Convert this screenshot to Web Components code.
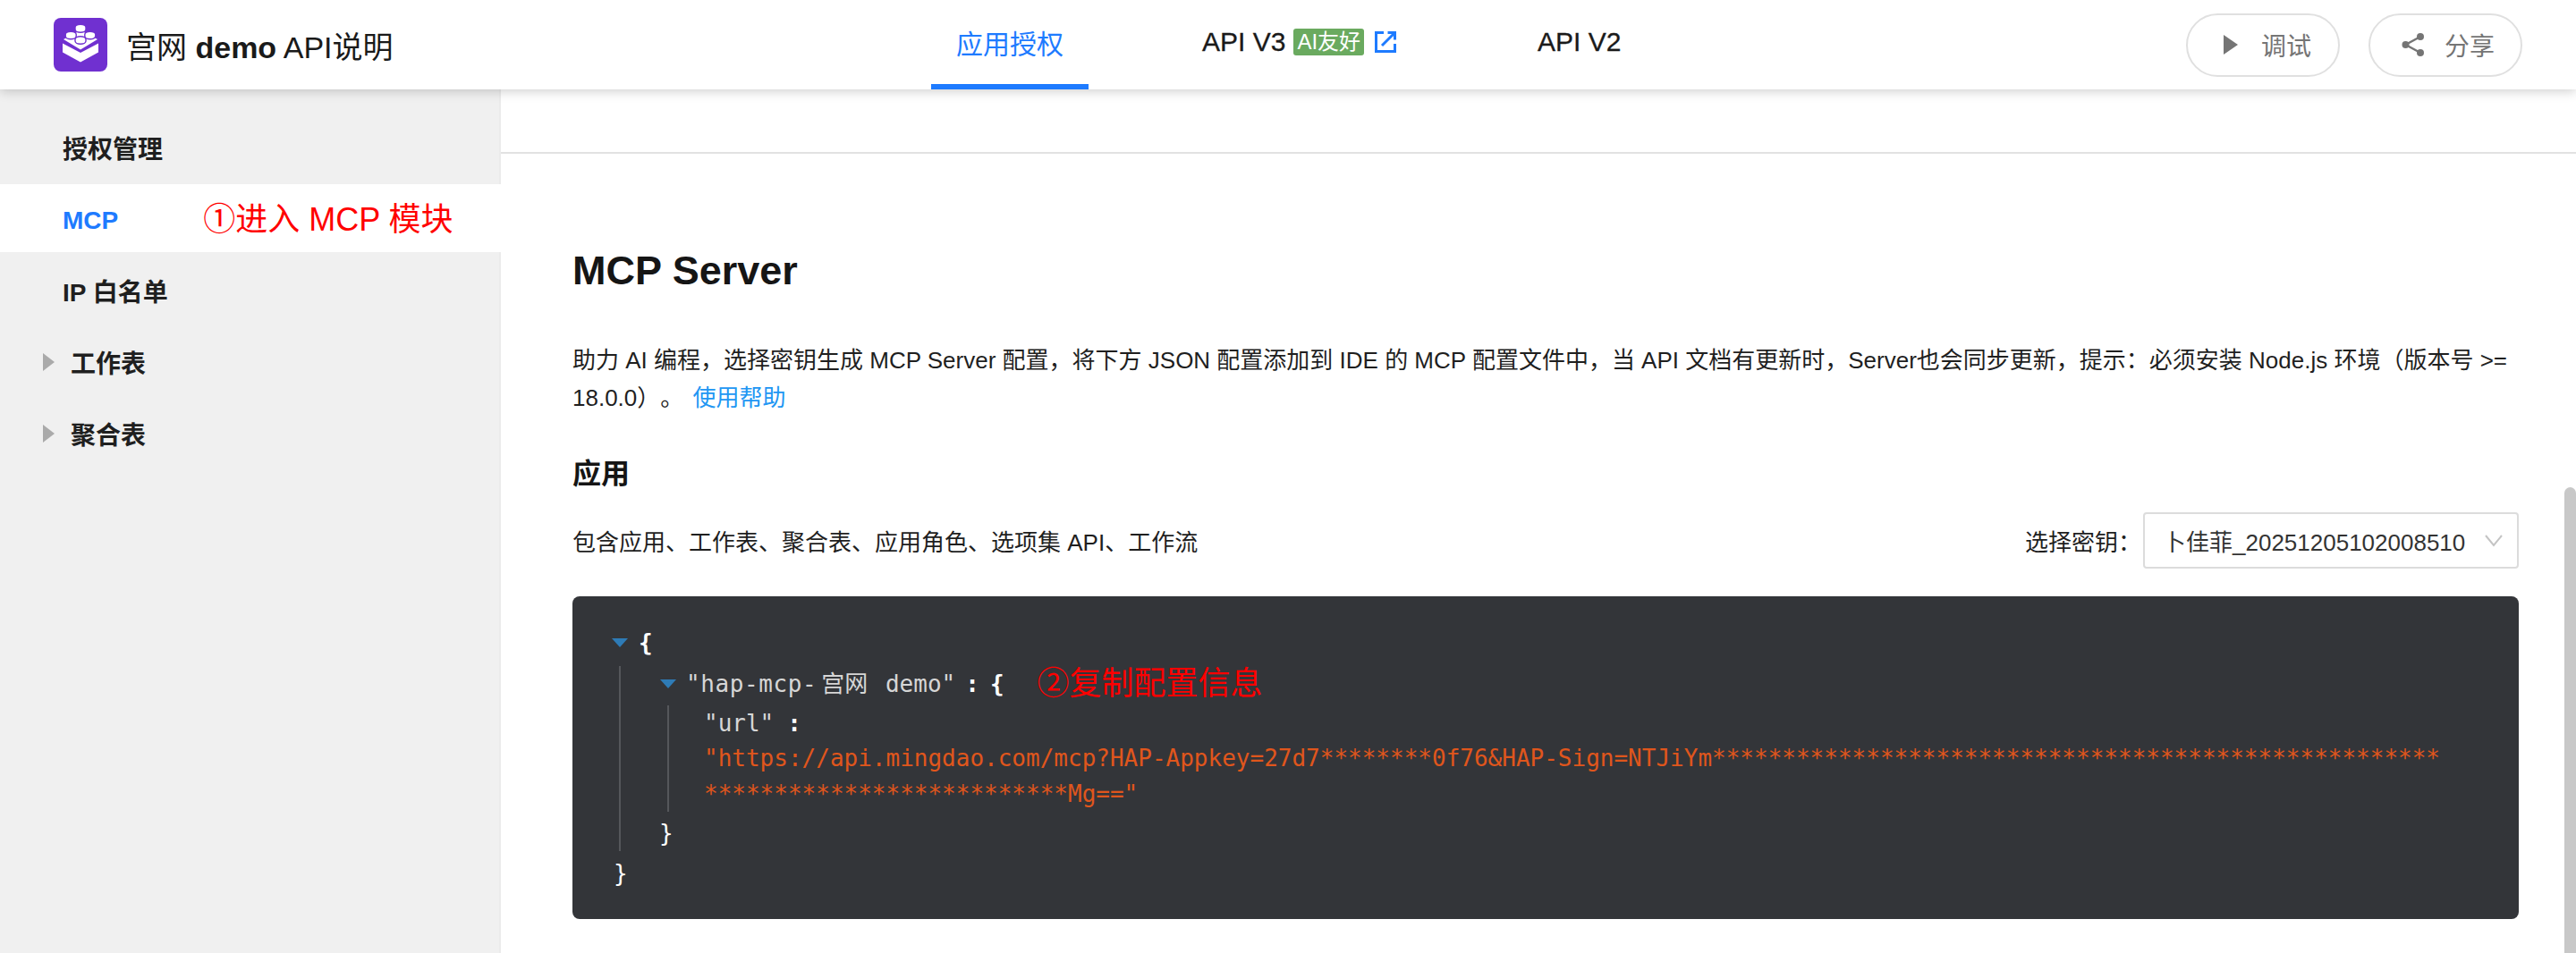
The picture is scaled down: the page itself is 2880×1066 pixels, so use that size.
<!DOCTYPE html>
<html lang="zh-CN">
<head>
<meta charset="utf-8">
<title>宫网 demo API说明</title>
<style>
  html, body { margin: 0; height: 100%; overflow: hidden; }
  body {
    font-family: "Liberation Sans", "Noto Sans CJK SC", sans-serif;
    color: #1a1a1a;
  }
  .shell { display: flex; flex-direction: column; height: 1066px; }
  .body-row { display: flex; flex: 1; min-height: 0; }
</style>
</head>
<body>
  <div class="shell">
    <doc-header>
      <tab-link active>应用授权</tab-link>
      <tab-link style="margin-left:99px" badge="AI友好" external>API V3</tab-link>
      <tab-link style="margin-left:101px">API V2</tab-link>
    </doc-header>
    <div class="body-row">
      <side-nav>
        <nav-item>授权管理</nav-item>
        <nav-item active>MCP<span slot="note">①进入 MCP 模块</span></nav-item>
        <nav-item>IP 白名单</nav-item>
        <nav-item expandable>工作表</nav-item>
        <nav-item expandable>聚合表</nav-item>
      </side-nav>
      <doc-main>
        <json-view><span slot="note">②复制配置信息</span></json-view>
      </doc-main>
    </div>
  </div>

<script>
// Barra superior: logo, pestañas (slot) y botones
class DocHeader extends HTMLElement {
  constructor() {
    super();
    this.attachShadow({ mode: "open" });
    this.shadowRoot.innerHTML = `
      <style>
        :host {
          display: flex;
          align-items: center;
          position: relative;
          z-index: 2;
          height: 100px;
          flex: none;
          background: #fff;
          box-shadow: 0 2px 12px rgba(0, 0, 0, 0.2);
        }
        .brand { display: flex; align-items: center; width: 1041px; padding-left: 60px; box-sizing: border-box; flex: none; }
        .brand svg { display: block; flex: none; }
        .title { margin-left: 21px; font-size: 34px; color: #1a1a1a; white-space: nowrap; }
        .title b { font-weight: 700; }
        .tabs { display: flex; height: 100%; flex: none; }
        .actions { margin-left: auto; margin-right: 60px; display: flex; gap: 32px; }
      </style>
      <div class="brand">
        <svg width="60" height="60" viewBox="0 0 60 60">
          <rect width="60" height="60" rx="8" fill="#7030d0"/>
          <path d="M10 28.5 L30 39 L50 28.5 V38.5 L30 49.5 L10 38.5 Z" fill="#fff"/>
          <path d="M11 24 L30 14 L49 24 L30 35.5 Z" fill="#fff"/>
          <g fill="#fff" stroke="#7030d0" stroke-width="1.4">
            <path d="M24 13 v-2.5 a6 3.2 0 0 1 12 0 V13 a6 3.2 0 0 1 -12 0 Z"/>
            <path d="M13.2 20.5 v-2 a6 3.2 0 0 1 12 0 v2 a6 3.2 0 0 1 -12 0 Z"/>
            <path d="M34.8 20.5 v-2 a6 3.2 0 0 1 12 0 v2 a6 3.2 0 0 1 -12 0 Z"/>
            <path d="M24 26 v-2 a6 3.2 0 0 1 12 0 v2 a6 3.2 0 0 1 -12 0 Z"/>
          </g>
        </svg>
        <span class="title">宫网 <b>demo</b> API说明</span>
      </div>
      <nav class="tabs"><slot></slot></nav>
      <div class="actions">
        <pill-button label="调试" icon="play"></pill-button>
        <pill-button label="分享" icon="share"></pill-button>
      </div>
    `;
  }
}

// Pestaña de la barra superior
class TabLink extends HTMLElement {
  constructor() {
    super();
    this.attachShadow({ mode: "open" });
  }

  connectedCallback() {
    const badge = this.getAttribute("badge");
    const external = this.hasAttribute("external");
    this.shadowRoot.innerHTML = `
      <style>
        :host {
          display: flex;
          align-items: center;
          box-sizing: border-box;
          height: 100px;
          padding: 0 28px;
          font-size: 30px;
          color: #1a1a1a;
          -webkit-text-stroke: 0.3px #1a1a1a;
          white-space: nowrap;
          border-bottom: 6px solid transparent;
        }
        :host([active]) { color: #1e7bff; -webkit-text-stroke: 0; border-bottom-color: #1e7bff; }
        .badge {
          margin-left: 9px;
          height: 30px;
          line-height: 30px;
          padding: 0 4px;
          border-radius: 3px;
          background: #6aaa5f;
          color: #fff;
          -webkit-text-stroke: 0;
          font-size: 24px;
        }
        svg { margin-left: 11px; display: block; }
      </style>
      <slot></slot>
      ${badge ? `<span class="badge">${badge}</span>` : ""}
      ${external ? `<svg width="26" height="26" viewBox="0 0 26 26" fill="none" stroke="#1e7bff" stroke-width="3">
        <path d="M11 2.5 H2.5 V23.5 H23.5 V15"/>
        <path d="M9 17 L22.5 3.5"/>
        <path d="M15.5 2.5 H23.5 V10.5"/>
      </svg>` : ""}
    `;
  }
}

// Botón redondeado con icono
class PillButton extends HTMLElement {
  constructor() {
    super();
    this.attachShadow({ mode: "open" });
  }

  connectedCallback() {
    const icons = {
      play: `<svg width="24" height="24" viewBox="0 0 24 24"><path d="M4 1 L20 12 L4 23 Z" fill="#757575"/></svg>`,
      share: `<svg width="26" height="28" viewBox="0 0 26 28" fill="#757575">
        <circle cx="21" cy="5" r="4"/><circle cx="4.5" cy="14" r="4"/><circle cx="21" cy="23" r="4"/>
        <path d="M21 5 L4.5 14 L21 23" fill="none" stroke="#757575" stroke-width="2.4"/>
      </svg>`,
    };
    this.shadowRoot.innerHTML = `
      <style>
        :host {
          display: flex;
          align-items: center;
          justify-content: center;
          gap: 22px;
          box-sizing: border-box;
          width: 172px;
          height: 71px;
          padding-left: 6px;
          border: 2px solid #e0e0e0;
          border-radius: 36px;
          color: #757575;
          font-size: 28px;
        }
        svg { display: block; }
      </style>
      ${icons[this.getAttribute("icon")]}
      <span>${this.getAttribute("label")}</span>
    `;
  }
}

// Columna lateral
class SideNav extends HTMLElement {
  constructor() {
    super();
    this.attachShadow({ mode: "open" });
    this.shadowRoot.innerHTML = `
      <style>
        :host {
          display: block;
          box-sizing: border-box;
          width: 560px;
          flex: none;
          padding-top: 26px;
          background: #f0f0f0;
          box-shadow: inset -2px 0 0 #ebebeb;
        }
      </style>
      <slot></slot>
    `;
  }
}

// Fila del menú lateral
class NavItem extends HTMLElement {
  constructor() {
    super();
    this.attachShadow({ mode: "open" });
  }

  connectedCallback() {
    const expandable = this.hasAttribute("expandable");
    this.shadowRoot.innerHTML = `
      <style>
        :host {
          display: flex;
          align-items: center;
          box-sizing: border-box;
          height: 80px;
          padding: 0 0 3px 70px;
          font-size: 28px;
          font-weight: 700;
          color: #1f1f1f;
        }
        :host([active]) {
          height: 76px;
          padding: 6px 0 0 70px;
          margin-bottom: 4px;
          background: #fff;
          color: #1e7bff;
        }
        :host([expandable]) { padding-left: 48px; }
        .arrow {
          width: 0; height: 0;
          margin-right: 18px;
          border-left: 13px solid #aaa;
          border-top: 10px solid transparent;
          border-bottom: 10px solid transparent;
        }
        ::slotted([slot="note"]) {
          margin: -10px 0 0 95px;
          font-size: 36px;
          font-weight: 400;
          color: #ff0000;
          white-space: nowrap;
        }
      </style>
      ${expandable ? `<span class="arrow"></span>` : ""}
      <slot></slot><slot name="note"></slot>
    `;
  }
}

// Contenido principal
class DocMain extends HTMLElement {
  constructor() {
    super();
    this.attachShadow({ mode: "open" });
    this.shadowRoot.innerHTML = `
      <style>
        :host {
          display: block;
          position: relative;
          flex: 1;
          min-width: 0;
          overflow: hidden;
          background: #fff;
          color: #1f1f1f;
        }
        .rule { height: 70px; border-bottom: 2px solid #e2e2e2; }
        .content { padding: 100px 64px 0 80px; }
        h1 { margin: 0; font-size: 45px; line-height: 62px; font-weight: 700; color: #151515; }
        p { margin: 48px 0 0; font-size: 26px; line-height: 42px; text-spacing-trim: space-all; }
        a { color: #2196f3; text-decoration: none; margin-left: 3px; }
        h2 { margin: 42px 0 0; font-size: 32px; line-height: 44px; font-weight: 700; color: #151515; }
        .row { display: flex; align-items: center; justify-content: space-between; margin-top: 21px; font-size: 26px; }
        .picker { display: flex; align-items: center; gap: 2px; }
        .scrollbar {
          position: absolute;
          top: 445px; right: 0; bottom: 0;
          width: 13px;
          background: #c8c8c8;
          border-radius: 7px 7px 0 0;
        }
      </style>
      <div class="rule"></div>
      <div class="content">
        <h1>MCP Server</h1>
        <p>助力 AI 编程&#xFF0C;选择密钥生成 MCP Server 配置&#xFF0C;将下方 JSON 配置添加到 IDE 的 MCP 配置文件中&#xFF0C;当 API 文档有更新时&#xFF0C;Server也会同步更新&#xFF0C;提示&#xFF1A;必须安装 Node.js 环境&#xFF08;版本号 &gt;= 18.0.0&#xFF09;&#x3002; <a href="#">使用帮助</a></p>
        <h2>应用</h2>
        <div class="row">
          <span>包含应用、工作表、聚合表、应用角色、选项集 API、工作流</span>
          <div class="picker"><span>选择密钥&#xFF1A;</span><key-select value="卜佳菲_20251205102008510"></key-select></div>
        </div>
        <slot></slot>
      </div>
      <div class="scrollbar"></div>
    `;
  }
}

// Selector de clave
class KeySelect extends HTMLElement {
  constructor() {
    super();
    this.attachShadow({ mode: "open" });
  }

  connectedCallback() {
    this.shadowRoot.innerHTML = `
      <style>
        :host {
          display: flex;
          align-items: center;
          box-sizing: border-box;
          width: 420px;
          height: 63px;
          padding: 0 16px 0 20px;
          border: 2px solid #dcdcdc;
          border-radius: 4px;
          font-size: 26px;
          color: #333;
        }
        span { flex: 1; white-space: nowrap; overflow: hidden; }
        svg { flex: none; display: block; }
      </style>
      <span>${this.getAttribute("value")}</span>
      <svg width="20" height="14" viewBox="0 0 20 14" fill="none" stroke="#c4c4c4" stroke-width="2"><path d="M1 1 L10 12 L19 1"/></svg>
    `;
  }
}

// Bloque JSON oscuro
class JsonView extends HTMLElement {
  constructor() {
    super();
    this.attachShadow({ mode: "open" });
    const stars = (n) => "*".repeat(n);
    const url = `"https://api.mingdao.com/mcp?HAP-Appkey=27d7${stars(8)}0f76&amp;HAP-Sign=NTJiYm${stars(78)}Mg=="`;
    this.shadowRoot.innerHTML = `
      <style>
        :host {
          display: block;
          box-sizing: border-box;
          height: 361px;
          margin-top: 31px;
          padding: 32px 80px 0 44px;
          border-radius: 8px;
          background: #333539;
          font-family: "DejaVu Sans Mono", "Noto Sans CJK SC", monospace;
          font-size: 26px;
          line-height: 40px;
          color: #fff;
        }
        .line { display: flex; align-items: center; height: 40px; white-space: pre; }
        .tri {
          width: 0; height: 0; flex: none;
          margin-right: 11px;
          border-top: 10px solid #2e7bb6;
          border-left: 9px solid transparent;
          border-right: 9px solid transparent;
        }
        .line > .tri:first-child + .brace { margin-left: 1px; }
        .nest { margin: 6px 0 5px 8px; padding-left: 44px; border-left: 2px solid #55575b; }
        .inner { margin: 4px 0 4px 8px; padding-left: 39px; border-left: 2px solid #55575b; }
        .close { margin-left: 2px; }
        .nest > .close { margin-left: -1px; }
        .key { color: #d6d6d6; }
        .stretch { letter-spacing: 0.6px; }
        .cjk { margin: 0 4px 0 5px; }
        .colon { margin: 0 12px 0 11px; font-weight: 700; }
        .url-colon { margin-left: 15px; font-weight: 700; }
        .brace { font-weight: 700; }
        .str { color: #e0561c; word-break: break-all; margin-top: -1px; }
        ::slotted([slot="note"]) {
          margin-left: 37px;
          font-family: "Liberation Sans", "Noto Sans CJK SC", sans-serif;
          font-size: 36px;
          color: #ff0000;
        }
      </style>
      <div class="line"><span class="tri"></span><span class="brace">{</span></div>
      <div class="nest">
        <div class="line"><span class="tri"></span><span class="key"><span class="stretch">"hap-mcp-</span><span class="cjk">宫网</span> demo"</span><span class="colon">:</span><span class="brace">{</span><slot name="note"></slot></div>
        <div class="inner">
          <div class="line"><span class="key">"url"</span><span class="url-colon">:</span></div>
          <div class="str">${url}</div>
        </div>
        <div class="line close">}</div>
      </div>
      <div class="line close">}</div>
    `;
  }
}

customElements.define("tab-link", TabLink);
customElements.define("pill-button", PillButton);
customElements.define("doc-header", DocHeader);
customElements.define("nav-item", NavItem);
customElements.define("side-nav", SideNav);
customElements.define("key-select", KeySelect);
customElements.define("json-view", JsonView);
customElements.define("doc-main", DocMain);
</script>
</body>
</html>
